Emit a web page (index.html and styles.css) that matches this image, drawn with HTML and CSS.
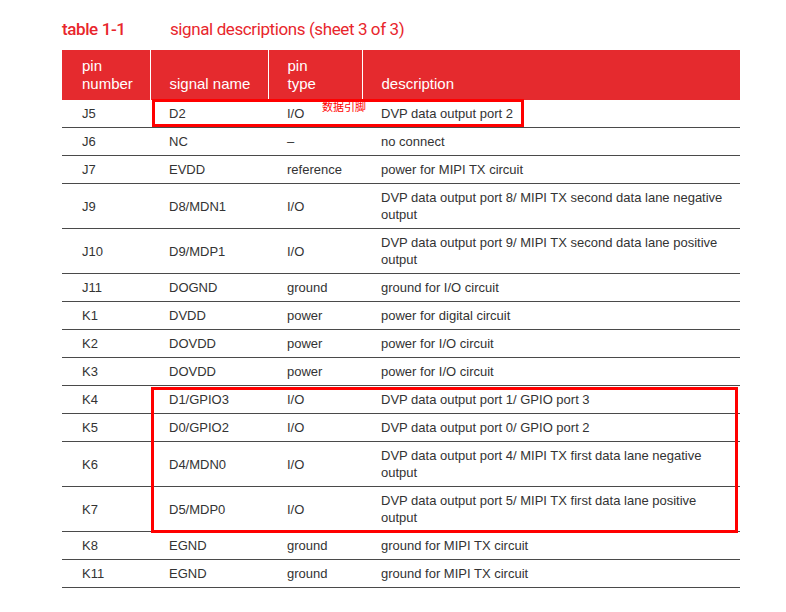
FILE: index.html
```html
<!DOCTYPE html>
<html>
<head>
<meta charset="utf-8">
<link rel="stylesheet" href="styles.css">
</head>
<body>
<div class="page">
  <div class="title">
    <span class="title-num">table 1-1</span>
    <span class="title-text">signal descriptions (sheet 3 of 3)</span>
  </div>
  <div class="table-wrap">
    <table class="sig">
      <colgroup>
        <col class="c1"><col class="c2"><col class="c3"><col class="c4">
      </colgroup>
      <thead>
        <tr>
          <th>pin<br>number</th>
          <th>signal name</th>
          <th>pin<br>type</th>
          <th>description</th>
        </tr>
      </thead>
      <tbody>
        <tr><td>J5</td><td>D2</td><td>I/O</td><td>DVP data output port 2</td></tr>
        <tr><td>J6</td><td>NC</td><td>–</td><td>no connect</td></tr>
        <tr><td>J7</td><td>EVDD</td><td>reference</td><td>power for MIPI TX circuit</td></tr>
        <tr><td>J9</td><td>D8/MDN1</td><td>I/O</td><td>DVP data output port 8/ MIPI TX second data lane negative<br>output</td></tr>
        <tr><td>J10</td><td>D9/MDP1</td><td>I/O</td><td>DVP data output port 9/ MIPI TX second data lane positive<br>output</td></tr>
        <tr><td>J11</td><td>DOGND</td><td>ground</td><td>ground for I/O circuit</td></tr>
        <tr><td>K1</td><td>DVDD</td><td>power</td><td>power for digital circuit</td></tr>
        <tr><td>K2</td><td>DOVDD</td><td>power</td><td>power for I/O circuit</td></tr>
        <tr><td>K3</td><td>DOVDD</td><td>power</td><td>power for I/O circuit</td></tr>
        <tr><td>K4</td><td>D1/GPIO3</td><td>I/O</td><td>DVP data output port 1/ GPIO port 3</td></tr>
        <tr><td>K5</td><td>D0/GPIO2</td><td>I/O</td><td>DVP data output port 0/ GPIO port 2</td></tr>
        <tr><td>K6</td><td>D4/MDN0</td><td>I/O</td><td>DVP data output port 4/ MIPI TX first data lane negative<br>output</td></tr>
        <tr><td>K7</td><td>D5/MDP0</td><td>I/O</td><td>DVP data output port 5/ MIPI TX first data lane positive<br>output</td></tr>
        <tr><td>K8</td><td>EGND</td><td>ground</td><td>ground for MIPI TX circuit</td></tr>
        <tr><td>K11</td><td>EGND</td><td>ground</td><td>ground for MIPI TX circuit</td></tr>
      </tbody>
    </table>
    <div class="mark mark-1"></div>
    <div class="note">数据引脚</div>
    <div class="mark mark-2"></div>
  </div>
</div>
</body>
</html>
```

FILE: styles.css
```css
html, body {
  margin: 0;
  padding: 0;
  background: #ffffff;
}

.page {
  padding: 19px 0 0 62px;
  width: 678px;
}

.title {
  display: flex;
  align-items: baseline;
  height: 31px;
  font-family: Roboto, "Liberation Sans", sans-serif;
  font-size: 17px;
  color: #e8262c;
  letter-spacing: -0.4px;
}

.title-num {
  font-weight: 500;
  width: 108px;
}

.title-text {
  font-weight: 400;
}

.table-wrap {
  position: relative;
}

.sig {
  width: 678px;
  border-collapse: collapse;
  table-layout: fixed;
  font-family: "Liberation Sans", Arial, sans-serif;
  font-size: 13px;
  color: #333333;
}

.c1 { width: 88px; }
.c2 { width: 118px; }
.c3 { width: 94px; }
.c4 { width: 378px; }

.sig th {
  background: #e52a2e;
  color: #ffffff;
  font-weight: 400;
  font-size: 15px;
  line-height: 18px;
  text-align: left;
  vertical-align: bottom;
  white-space: nowrap;
  height: 50px;
  padding: 0 0 7px 19px;
  box-sizing: border-box;
  border-left: 1px solid #ffffff;
}

.sig th:first-child {
  border-left: none;
  padding-left: 20px;
}

.sig td {
  line-height: 17px;
  padding: 5px 0 5px 19px;
  vertical-align: middle;
  white-space: nowrap;
  border-bottom: 1px solid #4a4a4a;
}

.sig td:first-child {
  padding-left: 20px;
}

.mark {
  position: absolute;
  border: 3px solid #ff0000;
  box-sizing: border-box;
}

.mark-1 {
  left: 90px;
  top: 49px;
  width: 372px;
  height: 28px;
}

.mark-2 {
  left: 89px;
  top: 337px;
  width: 587px;
  height: 146px;
}

.note {
  position: absolute;
  left: 260px;
  top: 50px;
  font-family: "Noto Sans CJK SC", sans-serif;
  font-size: 11px;
  line-height: 13px;
  color: #ff0000;
}
```
